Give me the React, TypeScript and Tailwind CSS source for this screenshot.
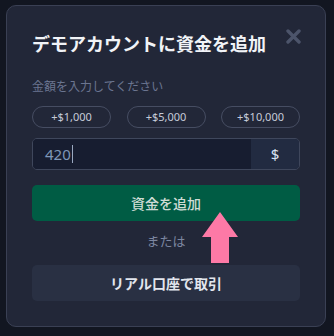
import { useState } from 'react';

const amounts = ['+$1,000', '+$5,000', '+$10,000'];

export default function App() {
    const [amount, setAmount] = useState<string>('420');

    return (
        <div className="relative w-[334px] h-[336px] overflow-hidden bg-[#121621] font-['Noto_Sans','Noto_Sans_CJK_JP',sans-serif]">
            <div className="relative ml-[6px] mt-[5px] w-[320px] h-[322px] rounded-[10px] border border-[#3a4054] bg-[#222738] px-[25px] pt-[26px] flex flex-col">
                <h2 className="text-[18px] leading-[24px] font-bold text-[#f1f3f7]">
                    デモアカウントに資金を追加
                </h2>
                <button className="absolute right-[24px] top-[23px] w-[15px] h-[15px]">
                    <svg viewBox="0 0 15 15" className="w-[15px] h-[15px]">
                        <path d="M2 2 L13 13 M13 2 L2 13" stroke="#4c546a" strokeWidth="3.4" strokeLinecap="round" />
                    </svg>
                </button>

                <p className="mt-[23px] text-[12px] leading-[16px] text-[#6b7590]">金額を入力してください</p>

                <div className="mt-[11px] flex justify-between">
                    {amounts.map((a) => (
                        <button
                            key={a}
                            onClick={() => setAmount(a.replace(/[+$,]/g, ''))}
                            className="w-[79px] h-[22px] rounded-full border border-[#464d62] text-[11px] text-[#c5cbd8] flex items-center justify-center"
                        >
                            {a}
                        </button>
                    ))}
                </div>

                <div className="mt-[10px] h-[32px] flex rounded-[5px] border border-[#3f475c] overflow-hidden">
                    <div className="flex-1 bg-[#171d30] flex items-center pl-[12px]">
                        <span className="text-[15px] text-[#7f97b8]">{amount}</span>
                        <span className="ml-[1px] w-px h-[18px] bg-[#9aa8c0]" />
                    </div>
                    <div className="w-[48px] bg-[#222b41] flex items-center justify-center text-[15px] text-[#d8e2f2]">
                        $
                    </div>
                </div>

                <button className="mt-[15px] h-[36px] rounded-[5px] bg-[#005c44] text-[14px] font-medium text-[#cfdcd6]">
                    資金を追加
                </button>

                <p className="mt-[10px] text-center text-[13px] leading-[20px] text-[#7c86a0]">または</p>

                <button className="mt-[14px] h-[36px] rounded-[5px] bg-[#293043] text-[14px] font-bold text-[#e2e6ee]">
                    リアル口座で取引
                </button>
            </div>

            <svg className="absolute left-[200px] top-[210px]" width="40" height="55" viewBox="0 0 40 55">
                <polygon points="20,2 38,27 29,27 29,53 11,53 11,27 2,27" fill="#fd79a6" />
            </svg>
        </div>
    );
}
